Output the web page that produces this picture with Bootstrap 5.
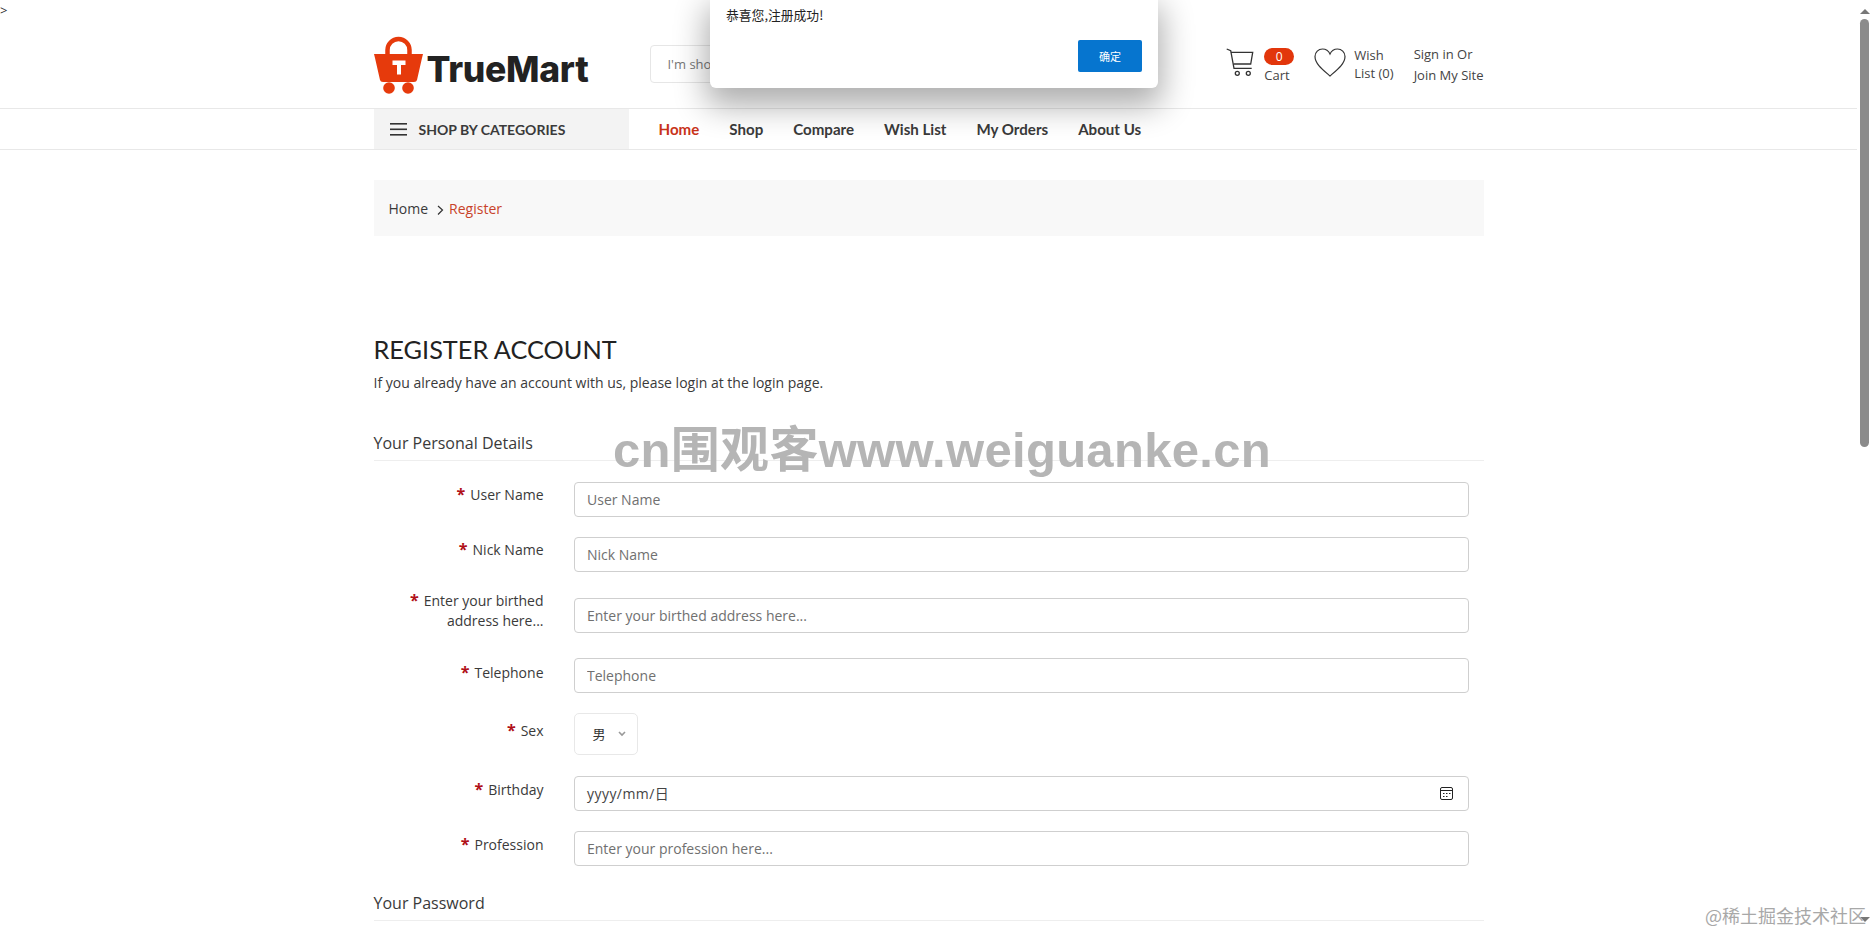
<!DOCTYPE html>
<html lang="en">
<head>
<meta charset="utf-8">
<title>Register</title>
<link rel="stylesheet" href="https://cdn.jsdelivr.net/npm/bootstrap@5.3.0/dist/css/bootstrap.min.css">
<style>
html,body{height:100%;overflow:hidden}
body{font-family:"Open Sans","Noto Sans CJK SC",sans-serif;font-size:14px;color:#333;background:#fff;position:relative}
.page-shell{height:932px;overflow:hidden}
.page-main{width:1857px;flex:none}
.scroll-rail{width:15px;flex:none;padding-top:9px;padding-bottom:10px}
.scroll-thumb{width:9px;height:428px;background:#8b8b8b;border-radius:5px;margin-top:5px}
.arrow-up,.arrow-down{width:0;height:0;border-left:5px solid transparent;border-right:5px solid transparent}
.arrow-up{border-bottom:5px solid #777}
.arrow-down{border-top:5px solid #777}
.stray{height:21px;line-height:21px;font-size:13px;color:#333}
.container.shop-wrap{max-width:1140px;padding-left:15px;padding-right:15px}
.head-row{height:87px}
.logo-word{font-family:Inter,sans-serif;font-weight:800;font-size:35.5px;letter-spacing:-.3px;color:#222;line-height:1;margin-left:3px;margin-top:10px}
.search-box{width:450px;height:38px;margin-left:62px;margin-top:-1px;border:1px solid #e6e6e6;border-radius:4px;padding:0 16px;font-size:13px;color:#777;line-height:36px}
.head-tools{font-size:13px;color:#444;line-height:21px}
.cart-icon{margin-bottom:4px}
.cart-col{margin-left:10px;margin-top:4px}
.heart-icon{margin-left:20px;margin-bottom:4px}
.wish-col{margin-left:8px;line-height:18px;margin-bottom:2px}
.sign-col{margin-left:20px}
.cart-badge{width:30px;height:17px;border-radius:9px;background:#e2360b;color:#fff;font-size:12px;line-height:17px;text-align:center}
.nav-strip{height:42px;border-top:1px solid #e8e8e8;border-bottom:1px solid #e8e8e8}
.cat-box{width:255px;height:40px;background:#f3f3f3;padding-left:16px;font-family:Lato,sans-serif;font-weight:700;font-size:14px;color:#3a3a3a;gap:12px}
.main-links{margin-left:30px;gap:30px;font-family:Lato,sans-serif;font-weight:700;font-size:15.1px;line-height:40px}
.main-links a{color:#3a3a3a;text-decoration:none}
.main-links a.is-on{color:#c8331a}
.crumb-box{height:56px;margin-top:30px;background:#f8f8f8;padding-left:15px;font-size:14px;color:#3a3a3a}
.crumb-sep{margin:3px 5px 0 9px}
.crumb-now{color:#c8432a}
.page-title{font-family:Lato,sans-serif;font-weight:400;font-size:25.3px;line-height:32px;color:#222;margin:97px 0 0}
.page-note{font-size:14px;line-height:20px;margin:8px 0 0;color:#3a3a3a}
.sect-title{font-family:"Open Sans",sans-serif;font-weight:400;font-size:16px;line-height:22px;color:#3a3a3a;margin:0;padding-bottom:6px;border-bottom:1px solid #eee}
.sect-personal{margin-top:39px}
.sect-password{margin-top:26px}
.form-line{display:grid;grid-template-columns:170px 895px;column-gap:30px}
.gap-top-21{margin-top:21px}
.gap-top-20{margin-top:20px}
.gap-top-26{margin-top:26px}
.gap-top-25{margin-top:25px}
.line-label{text-align:right;font-size:14px;line-height:20px;padding-top:3px;margin:0;color:#3a3a3a}
.label-tall{margin-top:-10px}
.label-mid{padding-top:5px}
.label-near{padding-top:4px}
.label-low{padding-top:8px}
.req{color:#b01018;font-weight:700;font-size:16px;line-height:1;margin-right:5px}
.form-control.shop-input{height:35px;border-color:#cfcfcf;border-radius:4px;font-size:14px;padding:0 12.5px;color:#444}
.form-control.shop-input::placeholder{color:#707070;opacity:1}
.date-text{letter-spacing:.45px}
.date-icon{margin-right:2px}
.sex-pick{width:64px;height:42px;border:1px solid #e8e8e8;border-radius:5px;padding-left:18px;font-family:"Noto Sans CJK SC",sans-serif;font-size:13px;color:#333;gap:12px}
.dialog-box{position:absolute;left:710px;top:-5px;width:448px;height:93px;background:#fff;border-radius:6px;box-shadow:0 14px 32px 4px rgba(0,0,0,.32);z-index:20;padding:10px 16px 16px;font-family:"Noto Sans CJK SC",sans-serif;font-size:12.8px;color:#222}
.btn.dialog-ok{background:#0675cf;color:#fff;border:0;border-radius:2px;width:64px;height:32px;padding:0;font-size:11px;position:absolute;right:16px;bottom:16px;font-family:"Noto Sans CJK SC",sans-serif}
.stamp-big{position:absolute;left:613px;top:420px;z-index:15;font-family:"Liberation Sans","Noto Sans CJK SC",sans-serif;font-weight:700;font-size:49px;line-height:60px;letter-spacing:.3px;color:#b5b5b5;white-space:nowrap}
.stamp-small{position:absolute;right:6px;bottom:5px;z-index:15;font-family:"Noto Sans CJK SC",sans-serif;font-size:18px;line-height:24px;color:#a8a8a8;white-space:nowrap}
</style>
</head>
<body>
<div class="page-shell d-flex">
  <div class="page-main">
    <div class="stray">&gt;</div>
    <div class="container shop-wrap">
      <div class="head-row d-flex align-items-center">
        <svg width="50" height="58" viewBox="0 0 50 58" aria-label="TrueMart logo">
          <path d="M13.500 20V14a11 11 0 0 1 22 0V20" fill="none" stroke="#e63a0c" stroke-width="4.500"/>
          <path d="M0 18H49L48 22 43 44q-.5 2-3 2H9q-2.500 0-3-2L1 22Z" fill="#e63a0c"/>
          <path d="M18.500 24.500h13v4.500h-4.500v9.500h-4V29h-4.500Z" fill="#fff"/>
          <circle cx="15" cy="52" r="5.800" fill="#e63a0c"/>
          <circle cx="34" cy="52" r="5.800" fill="#e63a0c"/>
        </svg>
        <div class="logo-word">TrueMart</div>
        <div class="search-box">I'm shopping for...</div>
        <div class="head-tools d-flex align-items-center ms-auto">
          <svg class="cart-icon" width="29" height="30" viewBox="0 0 29 30" fill="none" stroke="#333" stroke-width="1.300">
            <path d="M1.700 1L5.700 2.700 9 20.300H26.700"/><path d="M5.900 4.300H27.700L25.700 16H8.500"/>
            <circle cx="12.300" cy="25.300" r="2"/><circle cx="23.300" cy="25.300" r="2"/>
          </svg>
          <div class="cart-col text-start">
            <div class="cart-badge">0</div>
            <div>Cart</div>
          </div>
          <svg class="heart-icon" width="32" height="29" viewBox="0 0 32 29" fill="none" stroke="#333" stroke-width="1.200">
            <path d="M16 28C8 21 1 15.500 1 8.500 1 4 4.500 1 8.500 1 11.800 1 14.500 2.800 16 6 17.500 2.800 20.200 1 23.500 1 27.500 1 31 4 31 8.500 31 15.500 24 21 16 28Z"/>
          </svg>
          <div class="wish-col">Wish<br>List (0)</div>
          <div class="sign-col">Sign in Or<br>Join My Site</div>
        </div>
      </div>
    </div>
    <div class="nav-strip">
      <div class="container shop-wrap d-flex">
        <div class="cat-box d-flex align-items-center">
          <svg width="17" height="13" viewBox="0 0 17 13" fill="#333"><rect width="17" height="1.600"/><rect y="5.500" width="17" height="1.600"/><rect y="11" width="17" height="1.600"/></svg>
          SHOP BY CATEGORIES
        </div>
        <nav class="main-links d-flex">
          <a class="is-on" href="#">Home</a><a href="#">Shop</a><a href="#">Compare</a><a href="#">Wish List</a><a href="#">My Orders</a><a href="#">About Us</a>
        </nav>
      </div>
    </div>
    <div class="container shop-wrap">
      <div class="crumb-box d-flex align-items-center">
        <span>Home</span>
        <svg class="crumb-sep" width="7" height="10" viewBox="0 0 7 10" fill="none" stroke="#333" stroke-width="1.200"><path d="M1 1l4.500 4L1 9.500"/></svg>
        <span class="crumb-now">Register</span>
      </div>
      <h1 class="page-title">REGISTER ACCOUNT</h1>
      <p class="page-note">If you already have an account with us, please login at the login page.</p>
      <h2 class="sect-title sect-personal">Your Personal Details</h2>
      <form>
        <div class="form-line gap-top-21">
          <label class="line-label"><span class="req">*</span>User Name</label>
          <input class="form-control shop-input" placeholder="User Name">
        </div>
        <div class="form-line gap-top-20">
          <label class="line-label"><span class="req">*</span>Nick Name</label>
          <input class="form-control shop-input" placeholder="Nick Name">
        </div>
        <div class="form-line gap-top-26">
          <label class="line-label label-tall"><span class="req">*</span>Enter your birthed address here...</label>
          <input class="form-control shop-input" placeholder="Enter your birthed address here...">
        </div>
        <div class="form-line gap-top-25">
          <label class="line-label label-mid"><span class="req">*</span>Telephone</label>
          <input class="form-control shop-input" placeholder="Telephone">
        </div>
        <div class="form-line gap-top-20">
          <label class="line-label label-low"><span class="req">*</span>Sex</label>
          <div class="sex-pick d-flex align-items-center">
            <span>男</span>
            <svg width="8" height="6" viewBox="0 0 8 6" fill="none" stroke="#999" stroke-width="1.600"><path d="M1 1l3 3 3-3"/></svg>
          </div>
        </div>
        <div class="form-line gap-top-21">
          <label class="line-label label-near"><span class="req">*</span>Birthday</label>
          <div class="form-control shop-input d-flex align-items-center justify-content-between">
            <span class="date-text">yyyy/mm/日</span>
            <svg class="date-icon" width="13" height="13" viewBox="0 0 13 13" fill="none" stroke="#222"><rect x=".5" y=".5" width="12" height="12" rx="1.500"/><path d="M.5 3.500h12"/><path d="M3 6.500h1.500M6 6.500h1.500M9 6.500h1.500M3 9.500h1.500M6 9.500h1.500"/></svg>
          </div>
        </div>
        <div class="form-line gap-top-20">
          <label class="line-label label-near"><span class="req">*</span>Profession</label>
          <input class="form-control shop-input" placeholder="Enter your profession here...">
        </div>
      </form>
      <h2 class="sect-title sect-password">Your Password</h2>
    </div>
  </div>
  <div class="scroll-rail d-flex flex-column align-items-center">
    <div class="arrow-up"></div>
    <div class="scroll-thumb"></div>
    <div class="arrow-down mt-auto"></div>
  </div>
</div>
<div class="dialog-box" role="dialog">
  恭喜您,注册成功!
  <button type="button" class="btn dialog-ok">确定</button>
</div>
<div class="stamp-big">cn围观客www.weiguanke.cn</div>
<div class="stamp-small">@稀土掘金技术社区</div>
<script src="https://cdn.jsdelivr.net/npm/bootstrap@5.3.0/dist/js/bootstrap.bundle.min.js"></script>
</body>
</html>
